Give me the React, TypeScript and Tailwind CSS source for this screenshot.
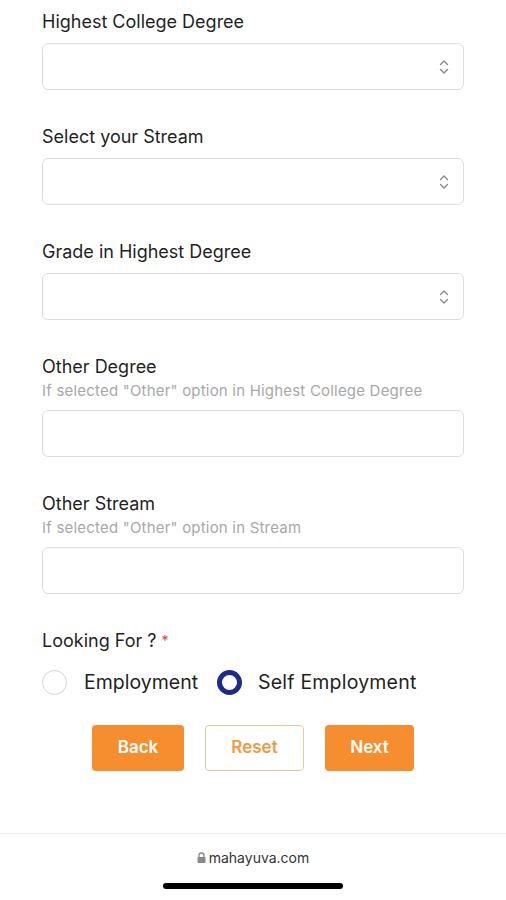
import React from "react";

function Chevrons() {
  return (
    <svg width="10" height="16" viewBox="0 0 10 16" fill="none" stroke="#8a8a8a" strokeWidth="1.4" strokeLinecap="round" strokeLinejoin="round">
      <path d="M1.5 5.5 L5 2 L8.5 5.5" />
      <path d="M1.5 10.5 L5 14 L8.5 10.5" />
    </svg>
  );
}

function SelectField({ label }: { label: string }) {
  return (
    <div className="flex flex-col">
      <div className="h-[24px] leading-[24px] text-[18px] text-[#1f1f1f]">{label}</div>
      <div className="mt-[9px] h-[47px] w-[422px] rounded-[6px] border border-[#dcdcdc] bg-white flex items-center justify-end pr-[14px]">
        <Chevrons />
      </div>
    </div>
  );
}

function TextField({ label, helper }: { label: string; helper: string }) {
  return (
    <div className="flex flex-col">
      <div className="h-[24px] leading-[24px] text-[18px] text-[#1f1f1f]">{label}</div>
      <div className="h-[23px] leading-[23px] text-[15px] tracking-[0.2px] text-[#a8a8a8]">{helper}</div>
      <div className="mt-[8px] h-[47px] w-[422px] rounded-[6px] border border-[#dcdcdc] bg-white" />
    </div>
  );
}

export default function App() {
  return (
    <div className="w-[506px] h-[900px] bg-white flex flex-col" style={{ fontFamily: "Inter, 'Liberation Sans', sans-serif" }}>
      <div className="flex flex-col gap-[35px] px-[42px] pt-[10px]">
        <SelectField label="Highest College Degree" />
        <SelectField label="Select your Stream" />
        <SelectField label="Grade in Highest Degree" />
        <TextField label="Other Degree" helper={'If selected "Other" option in Highest College Degree'} />
        <TextField label="Other Stream" helper={'If selected "Other" option in Stream'} />
      </div>
      <div className="flex flex-col px-[42px] mt-[35px]">
        <div className="h-[24px] leading-[24px] text-[18px] text-[#1f1f1f]">
          Looking For ? <span className="text-[#e53935] text-[14px] align-top">*</span>
        </div>
        <div className="mt-[17px] flex items-center h-[25px]">
          <div className="w-[25px] h-[25px] rounded-full border border-[#d4d4d4] bg-white" />
          <span className="ml-[17px] text-[19.5px] text-[#1f1f1f]">Employment</span>
          <div className="ml-[19px] w-[25px] h-[25px] rounded-full border-[5px] border-[#1c2a8c] bg-white" />
          <span className="ml-[16px] text-[19.5px] tracking-[0.2px] text-[#1f1f1f]">Self Employment</span>
        </div>
        <div className="mt-[30px] flex justify-center gap-[21px]">
          <button className="w-[92px] h-[46px] rounded-[4px] bg-[#f68d2e] text-white text-[17px] font-semibold">Back</button>
          <button className="w-[99px] h-[46px] rounded-[4px] border border-[#ebc79c] bg-white text-[#f09a47] text-[17px] font-semibold">Reset</button>
          <button className="w-[89px] h-[46px] rounded-[4px] bg-[#f68d2e] text-white text-[17px] font-semibold">Next</button>
        </div>
      </div>
      <div className="mt-[62px] border-t border-[#ededed] flex-1 flex flex-col items-center">
        <div className="mt-[13px] flex items-center gap-[3px] text-[14px] text-[#333]">
          <svg width="9" height="11" viewBox="0 0 9 11">
            <path d="M2 5 V3.5 A2.5 2.5 0 0 1 7 3.5 V5" fill="none" stroke="#8a8a8a" strokeWidth="1.3" />
            <rect x="0.5" y="5" width="8" height="6" rx="1" fill="#8a8a8a" />
          </svg>
          <span>mahayuva.com</span>
        </div>
        <div className="mt-[15px] w-[180px] h-[6px] rounded-full bg-black" />
      </div>
    </div>
  );
}
